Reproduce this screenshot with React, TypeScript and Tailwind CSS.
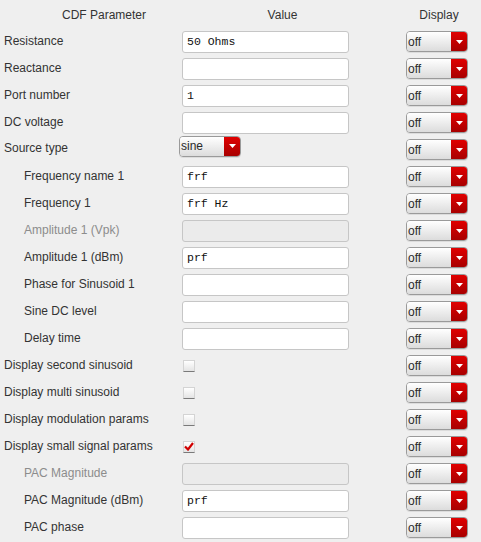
import React from 'react';

type Row = {
  label: string;
  indent?: boolean;
  disabled?: boolean;
  kind: 'text' | 'combo' | 'check';
  value?: string;
  checked?: boolean;
};

const rows: Row[] = [
  { label: 'Resistance', kind: 'text', value: '50 Ohms' },
  { label: 'Reactance', kind: 'text', value: '' },
  { label: 'Port number', kind: 'text', value: '1' },
  { label: 'DC voltage', kind: 'text', value: '' },
  { label: 'Source type', kind: 'combo', value: 'sine' },
  { label: 'Frequency name 1', indent: true, kind: 'text', value: 'frf' },
  { label: 'Frequency 1', indent: true, kind: 'text', value: 'frf Hz' },
  { label: 'Amplitude 1 (Vpk)', indent: true, disabled: true, kind: 'text', value: '' },
  { label: 'Amplitude 1 (dBm)', indent: true, kind: 'text', value: 'prf' },
  { label: 'Phase for Sinusoid 1', indent: true, kind: 'text', value: '' },
  { label: 'Sine DC level', indent: true, kind: 'text', value: '' },
  { label: 'Delay time', indent: true, kind: 'text', value: '' },
  { label: 'Display second sinusoid', kind: 'check' },
  { label: 'Display multi sinusoid', kind: 'check' },
  { label: 'Display modulation params', kind: 'check' },
  { label: 'Display small signal params', kind: 'check', checked: true },
  { label: 'PAC Magnitude', indent: true, disabled: true, kind: 'text', value: '' },
  { label: 'PAC Magnitude (dBm)', indent: true, kind: 'text', value: 'prf' },
  { label: 'PAC phase', indent: true, kind: 'text', value: '' },
];

const sans = "font-['Liberation_Sans',Arial,sans-serif]";

function Combo({ value, width }: { value: string; width: string }) {
  return (
    <div
      className={`${width} h-[21px] flex rounded-[4px] border border-[#9a9a9a] overflow-hidden shadow-[0_1px_0_rgba(0,0,0,0.08)]`}
    >
      <div className={`flex-1 flex items-center pl-[1px] text-[12px] text-[#2a2a2a] bg-gradient-to-b from-white to-[#dcdcdc] ${sans}`}>
        {value}
      </div>
      <div className="w-[16px] flex items-center justify-center bg-gradient-to-b from-[#e00000] to-[#a80000]">
        <svg width="7" height="4" viewBox="0 0 7 4">
          <polygon points="0,0 7,0 3.5,4" fill="#ffffff" />
        </svg>
      </div>
    </div>
  );
}

function Check({ checked }: { checked?: boolean }) {
  return (
    <div className="w-[12px] h-[12px] ml-[1px] border border-[#d4d4d4] border-b-[#7a7a7a] bg-gradient-to-b from-white to-[#e4e4e4] flex items-center justify-center">
      {checked && (
        <svg width="10" height="9" viewBox="0 0 10 9">
          <path d="M1 4.5 L4 7.5 L9 1" stroke="#d00000" strokeWidth="2.2" fill="none" />
        </svg>
      )}
    </div>
  );
}

export default function App() {
  return (
    <div className={`w-[481px] h-[542px] bg-[#efefef] text-[#333333] text-[12px] ${sans} overflow-hidden`}>
      {/* header */}
      <div className="h-[28px] flex items-center pt-[1px]">
        <div className="w-[208px] text-center">CDF Parameter</div>
        <div className="w-[149px] text-center">Value</div>
        <div className="w-[84px] ml-[40px] text-center">Display</div>
      </div>

      {rows.map((r, i) => (
        <div key={i} className="h-[27px] flex items-center">
          <div
            className={`w-[182px] whitespace-nowrap ${r.indent ? 'pl-[24px]' : 'pl-[4px]'} ${r.disabled ? 'text-[#8c8c8c]' : ''} ${r.kind === 'combo' ? 'mb-[4px]' : 'mb-[2px]'}`}
          >
            {r.label}
          </div>
          <div className="w-[224px] flex items-center">
            {r.kind === 'text' && (
              <div
                className={`w-[167px] h-[22px] rounded-[3px] border border-[#c6c6c6] flex items-center pl-[4px] text-[11.5px] text-[#111111] font-['Liberation_Mono','Courier_New',monospace] ${r.disabled ? 'bg-[#ebebeb]' : 'bg-white'}`}
              >
                {r.value}
              </div>
            )}
            {r.kind === 'combo' && (
              <div className="-ml-[3px] mb-[7px]">
                <Combo value={r.value ?? ''} width="w-[62px]" />
              </div>
            )}
            {r.kind === 'check' && <Check checked={r.checked} />}
          </div>
          <Combo value="off" width="w-[62px]" />
        </div>
      ))}
    </div>
  );
}
